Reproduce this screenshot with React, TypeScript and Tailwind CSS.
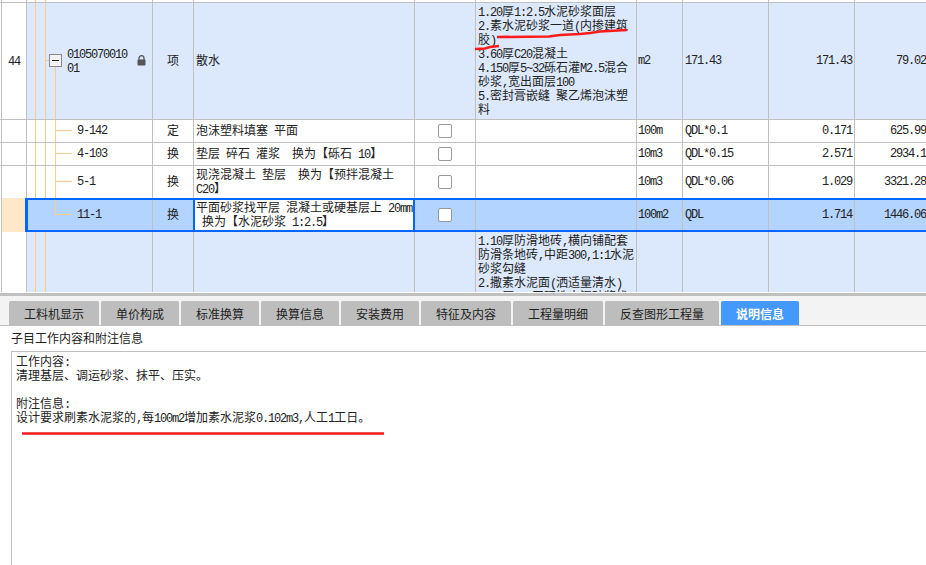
const cols = "grid grid-cols-[27px_126px_41px_221px_61px_161px_46px_86px_86px_72px]"
const cellBorder = "border-r border-[#c0c0c0]"

// ascii runs are half width (6px a char), cjk runs 12px
function T({ children }: { children: string }) {
  const runs = children.match(/[\x00-\x7f]+|[^\x00-\x7f]+/g) || []
  return (
    <span className="whitespace-pre">
      {runs.map((run, i) =>
        /^[\x00-\x7f]/.test(run) ? (
          <span key={i} className="font-['Liberation_Mono',monospace] text-[12px] tracking-[-1.2px]">{run}</span>
        ) : (
          <span key={i} className="text-[12px]">{run}</span>
        ),
      )}
    </span>
  )
}

function Lines({ items }: { items: string[] }) {
  return (
    <div className="leading-[14px]">
      {items.map((line, i) => (
        <div key={i} className="h-[14px] whitespace-pre">
          <T>{line}</T>
        </div>
      ))}
    </div>
  )
}

function Tree({ branch = true, guides = true, stemBottom = "bottom-0" }: { branch?: boolean; guides?: boolean; stemBottom?: string }) {
  return (
    <>
      {guides && (
        <>
          <div className="absolute left-[8px] top-0 bottom-0 w-px bg-[#ffcc88]" />
          <div className="absolute left-[18px] top-0 bottom-0 w-px bg-[#ffcc88]" />
        </>
      )}
      {branch && (
        <>
          <div className={`absolute left-[28px] top-0 w-px bg-[#ffcc88] ${stemBottom}`} />
          <div className="absolute left-[28px] top-[calc(50%-1px)] h-px w-[17px] bg-[#ffcc88]" />
        </>
      )}
    </>
  )
}

function Row(props: {
  h: string
  bg?: string
  border?: boolean
  no?: string
  code?: string
  type?: string
  name?: string[]
  check?: boolean
  spec?: string[]
  unit?: string
  expr?: string
  qty?: string
  price?: string
  stemBottom?: string
  noBranch?: boolean
  noGuides?: boolean
  noBg?: string
}) {
  const { h, bg = "bg-white", border = true } = props
  return (
    <div className={`${cols} ${h} overflow-hidden ${border ? "border-b border-[#c0c0c0]" : ""}`}>
      <div className={`ml-px flex items-center justify-center border-l border-r border-[#c0c0c0] ${props.noBg || "bg-white"}`}>
        {props.no && <T>{props.no}</T>}
      </div>
      <div className={`relative flex items-center pb-[2px] pl-[50px] ${cellBorder} ${bg}`}>
        <Tree branch={!props.noBranch} guides={!props.noGuides} stemBottom={props.stemBottom} />
        {props.code && <T>{props.code}</T>}
      </div>
      <div className={`flex items-center justify-center pb-[2px] ${cellBorder} ${bg}`}>
        {props.type && <T>{props.type}</T>}
      </div>
      <div className={`flex items-center pb-[2px] pl-[2px] ${cellBorder} ${bg}`}>
        {props.name && <Lines items={props.name} />}
      </div>
      <div className={`flex items-center justify-center ${cellBorder} ${bg}`}>
        {props.check && <div className="h-[14px] w-[14px] rounded-[2px] border border-[#999999] bg-white" />}
      </div>
      <div className={`pl-[2px] ${props.spec ? "pt-px" : "flex items-center"} ${cellBorder} ${bg}`}>
        {props.spec && <Lines items={props.spec} />}
      </div>
      <div className={`flex items-center pb-[2px] pl-px ${cellBorder} ${bg}`}>{props.unit && <T>{props.unit}</T>}</div>
      <div className={`flex items-center pb-[2px] pl-[2px] ${cellBorder} ${bg}`}>{props.expr && <T>{props.expr}</T>}</div>
      <div className={`flex items-center justify-end pb-[2px] pr-[2px] ${cellBorder} ${bg}`}>{props.qty && <T>{props.qty}</T>}</div>
      <div className={`flex items-center justify-end pb-[2px] pr-px ${bg}`}>{props.price && <T>{props.price}</T>}</div>
    </div>
  )
}

const tabs = [
  { label: "工料机显示", w: "w-[90px]" },
  { label: "单价构成", w: "w-[78px]" },
  { label: "标准换算", w: "w-[78px]" },
  { label: "换算信息", w: "w-[78px]" },
  { label: "安装费用", w: "w-[78px]" },
  { label: "特征及内容", w: "w-[90px]" },
  { label: "工程量明细", w: "w-[90px]" },
  { label: "反查图形工程量", w: "w-[114px]" },
]

export default function App() {
  return (
    <div className="relative flex h-[565px] w-[926px] flex-col overflow-hidden bg-white font-['Noto_Sans_CJK_SC',sans-serif] text-[12px] text-[#222222]">
      <div className="h-[292px] shrink-0 overflow-hidden">
        <Row h="h-[3px]" noBranch />
        <div className={`${cols} h-[117px] border-b border-[#c0c0c0]`}>
          <div className="ml-px flex items-center justify-center border-l border-r border-[#c0c0c0] bg-white">
            <T>44</T>
          </div>
          <div className={`relative flex items-center pb-[2px] pl-[40px] ${cellBorder} bg-[#dce9fd]`}>
            <div className="absolute left-[8px] top-0 bottom-0 w-px bg-[#ffcc88]" />
            <div className="absolute left-[18px] top-0 bottom-0 w-px bg-[#ffcc88]" />
            <div className="absolute left-[18px] top-[57px] h-px w-[4px] bg-[#ffcc88]" />
            <div className="absolute left-[28px] top-[64px] bottom-0 w-px bg-[#ffcc88]" />
            <div className="absolute left-[22px] top-[51px] flex h-[13px] w-[13px] items-center justify-center border border-[#888888] bg-[#f2f2f2]">
              <div className="h-px w-[7px] bg-[#222222]" />
            </div>
            <Lines items={["0105070010", "01"]} />
            <svg className="absolute left-[110px] top-[52px]" width="9" height="11" viewBox="0 0 9 11">
              <path d="M2 5V3.2a2.5 2.5 0 0 1 5 0V5" fill="none" stroke="#555555" strokeWidth="1.3" />
              <rect x="0.5" y="4.5" width="8" height="6" rx="1" fill="#555555" />
            </svg>
          </div>
          <div className={`flex items-center justify-center pb-[2px] ${cellBorder} bg-[#dce9fd]`}>
            <T>项</T>
          </div>
          <div className={`flex items-center pb-[2px] pl-[2px] ${cellBorder} bg-[#dce9fd]`}>
            <T>散水</T>
          </div>
          <div className={`${cellBorder} bg-[#dce9fd]`} />
          <div className={`pl-[2px] pt-px ${cellBorder} bg-[#dce9fd]`}>
            <Lines
              items={[
                "1.20厚1:2.5水泥砂浆面层",
                "2.素水泥砂浆一道(内掺建筑",
                "胶)",
                "3.60厚C20混凝土",
                "4.150厚5~32砾石灌M2.5混合",
                "砂浆,宽出面层100",
                "5.密封膏嵌缝 聚乙烯泡沫塑",
                "料",
              ]}
            />
          </div>
          <div className={`flex items-center pb-[2px] pl-px ${cellBorder} bg-[#dce9fd]`}><T>m2</T></div>
          <div className={`flex items-center pb-[2px] pl-[2px] ${cellBorder} bg-[#dce9fd]`}><T>171.43</T></div>
          <div className={`flex items-center justify-end pb-[2px] pr-[2px] ${cellBorder} bg-[#dce9fd]`}><T>171.43</T></div>
          <div className="flex items-center justify-end pb-[2px] pr-px bg-[#dce9fd]"><T>79.02</T></div>
        </div>
        <Row h="h-[23px]" code="9-142" type="定" name={["泡沫塑料填塞 平面"]} check unit="100m" expr="QDL*0.1" qty="0.171" price="625.99" />
        <Row h="h-[23px]" code="4-103" type="换" name={["垫层 碎石 灌浆  换为【砾石 10】"]} check unit="10m3" expr="QDL*0.15" qty="2.571" price="2934.1" />
        <Row h="h-[32px]" border={false} code="5-1" type="换" name={["现浇混凝土 垫层  换为【预拌混凝土", "C20】"]} check unit="10m3" expr="QDL*0.06" qty="1.029" price="3321.28" />
        <div className="relative">
          <Row h="h-[34px]" border={false} bg="bg-[#b3d4ff]" noBg="bg-[#ffe8c8]" code="11-1" type="换" check unit="100m2" expr="QDL" qty="1.714" price="1446.06" noGuides stemBottom="bottom-[17px]" />
          {/* current row outline and the cell being edited lie over the row */}
          <div className="absolute left-[25px] right-0 top-0 bottom-0 border-y-2 border-l-[3px] border-[#0066ff]" />
          <div className="absolute left-[193px] top-0 bottom-0 flex w-[222px] items-center overflow-hidden border-2 border-[#0066ff] bg-white pb-[2px] pl-px">
            <Lines items={["平面砂浆找平层 混凝土或硬基层上 20mm", " 换为【水泥砂浆 1:2.5】"]} />
          </div>
        </div>
        <Row
          h="h-[61px]"
          border={false}
          bg="bg-[#dce9fd]"
          noBranch
          spec={[
            "1.10厚防滑地砖,横向铺配套",
            "防滑条地砖,中距300,1:1水泥",
            "砂浆勾缝",
            "2.撒素水泥面(洒适量清水)",
            "3.20厚1:3干硬性水泥砂浆找",
          ]}
        />
      </div>

      <div className="mt-[1px] h-[3px] shrink-0 bg-[#c0c0c0]" />

      <div className="flex h-[30px] shrink-0 items-end gap-[2px] border-b border-[#c0c0c0] bg-[#f3f3f3] pl-[9px]">
        {tabs.map((tab) => (
          <div key={tab.label} className={`flex h-[24px] items-center justify-center rounded-t-[2px] bg-[#bdbdbd] pt-px ${tab.w}`}>
            <T>{tab.label}</T>
          </div>
        ))}
        <div className="flex h-[24px] w-[78px] items-center justify-center rounded-t-[2px] bg-[#4499ff] pt-px font-bold text-white">
          <T>说明信息</T>
        </div>
      </div>

      <div className="flex h-[25px] shrink-0 items-center pb-px pl-[11px]">
        <T>子目工作内容和附注信息</T>
      </div>
      <div className="ml-[11px] flex-1 border-l border-t border-[#c0c0c0] pl-[4px] pt-[2px]">
        <Lines
          items={[
            "工作内容:",
            "清理基层、调运砂浆、抹平、压实。",
            "",
            "附注信息:",
            "设计要求刷素水泥浆的,每100m2增加素水泥浆0.102m3,人工1工日。",
          ]}
        />
      </div>

      {/* red marker strokes drawn over the screenshot */}
      <svg className="pointer-events-none absolute left-0 top-0" width="926" height="565" viewBox="0 0 926 565">
        <path d="M497 37 L549 36.5 L560 35 L580 34 L590 33 L600 31.5 L627 30" fill="none" stroke="#ff1a1a" strokeWidth="2.5" />
        <path d="M475 49 L485 48.5 L490 47 L499 46" fill="none" stroke="#ff1a1a" strokeWidth="2.5" />
        <path d="M22 433.5 L384 433.5" fill="none" stroke="#ff1a1a" strokeWidth="2.5" />
      </svg>
    </div>
  )
}
